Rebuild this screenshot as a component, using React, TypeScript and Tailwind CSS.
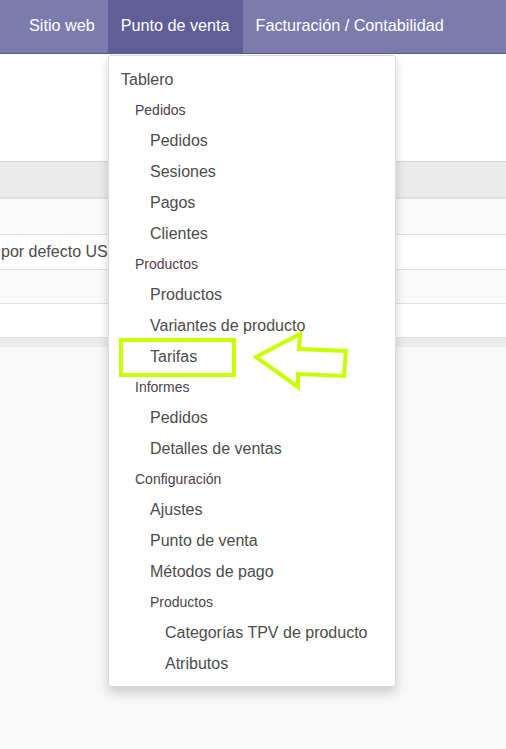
import React from 'react';

type Entry = { label: string; kind: 'top' | 'header' | 'item' | 'subheader' | 'subitem' };

const menu: Entry[] = [
  { label: 'Tablero', kind: 'top' },
  { label: 'Pedidos', kind: 'header' },
  { label: 'Pedidos', kind: 'item' },
  { label: 'Sesiones', kind: 'item' },
  { label: 'Pagos', kind: 'item' },
  { label: 'Clientes', kind: 'item' },
  { label: 'Productos', kind: 'header' },
  { label: 'Productos', kind: 'item' },
  { label: 'Variantes de producto', kind: 'item' },
  { label: 'Tarifas', kind: 'item' },
  { label: 'Informes', kind: 'header' },
  { label: 'Pedidos', kind: 'item' },
  { label: 'Detalles de ventas', kind: 'item' },
  { label: 'Configuración', kind: 'header' },
  { label: 'Ajustes', kind: 'item' },
  { label: 'Punto de venta', kind: 'item' },
  { label: 'Métodos de pago', kind: 'item' },
  { label: 'Productos', kind: 'subheader' },
  { label: 'Categorías TPV de producto', kind: 'subitem' },
  { label: 'Atributos', kind: 'subitem' },
];

const rowClass: Record<Entry['kind'], string> = {
  top: 'h-[31px] pl-[12px] text-[16px] text-[#4c4c4c]',
  header: 'h-[30px] pl-[26px] text-[14px] text-[#4f404d]',
  item: 'h-[31px] pl-[41px] text-[16px] text-[#4c4c4c]',
  subheader: 'h-[30px] pl-[41px] text-[14px] text-[#4f404d]',
  subitem: 'h-[31px] pl-[56px] text-[16px] text-[#4c4c4c]',
};

function NavItem({ label, active = false }: { label: string; active?: boolean }) {
  return (
    <div className={`flex h-full items-center px-[13px] pb-[2px] ${active ? 'bg-[#5f5e97]' : ''}`}>{label}</div>
  );
}

export default function App() {
  return (
    <div className="relative h-[749px] w-[506px] overflow-hidden bg-[#f9f9f9] font-['Liberation_Sans',Arial,sans-serif]">
      {/* top bar */}
      <nav className="flex h-[54px] border-b border-[#5b5a8f] bg-[#7c7bad] pl-[16px] text-[16.2px] text-white">
        <NavItem label="Sitio web" />
        <NavItem label="Punto de venta" active />
        <NavItem label="Facturación / Contabilidad" />
      </nav>

      {/* page behind the menu */}
      <div className="h-[107px] bg-white" />
      <div className="border-t border-[#d6d6d6]">
        <div className="h-[37px] border-b-2 border-[#e1e1e1] bg-[#ebebeb]" />
        <div className="h-[36px] border-b border-[#e2e2e2] bg-[#fafafa]" />
        <div className="flex h-[35px] items-center border-b border-[#e2e2e2] bg-white pl-px text-[16px] text-[#4c4c4c]">
          <span className="whitespace-nowrap">por defecto USD</span>
        </div>
        <div className="h-[34px] border-b border-[#e2e2e2] bg-[#fafafa]" />
        <div className="h-[34px] border-b border-[#e2e2e2] bg-white" />
        <div className="h-[9px] bg-[#ececec]" />
      </div>

      {/* dropdown */}
      <div className="absolute left-[108px] top-[55px] w-[288px] rounded-[3px] border border-[#dcdcdc] bg-white pb-[7px] pt-[8px] shadow-[0_6px_12px_rgba(0,0,0,0.175)]">
        {menu.map((m, i) => (
          <div key={i} className={`flex items-center whitespace-nowrap ${rowClass[m.kind]}`}>
            {m.label}
          </div>
        ))}
      </div>

      {/* highlight annotation */}
      <svg className="pointer-events-none absolute left-0 top-0" width="506" height="749" viewBox="0 0 506 749">
        <rect x="121" y="340" width="113" height="35" fill="none" stroke="#c8ff00" strokeWidth="4" />
        <polygon
          points="256,357 300,334 299,349 346,351 344,376 298,374 298,387"
          fill="none"
          stroke="#c8ff00"
          strokeWidth="4"
          strokeLinejoin="miter"
        />
      </svg>
    </div>
  );
}
